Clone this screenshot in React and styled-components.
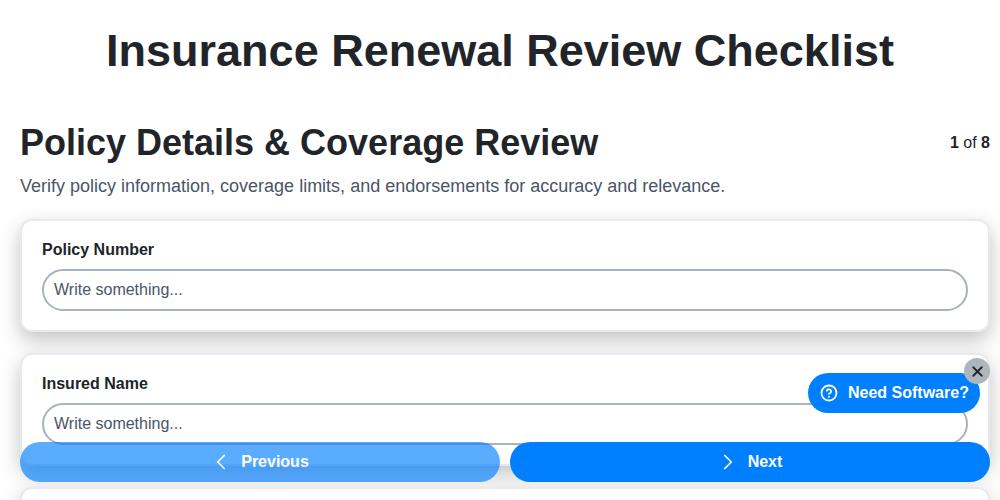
import React from "react"
import styled, { createGlobalStyle } from "styled-components"
import { ChevronLeft, ChevronRight, CircleHelp, X } from "lucide-react"

const GlobalStyle = createGlobalStyle`
    html, body {
        margin: 0;
        height: 100%;
        overflow: hidden;
        background: #fff;
        font-family: "Liberation Sans", Arial, sans-serif;
        color: #212529;
    }
    * {
        box-sizing: border-box;
    }
`

const Title = styled.h1`
    margin: 0;
    padding-top: 25px;
    height: 120px;
    font-size: 45px;
    line-height: 52px;
    font-weight: 700;
    text-align: center;
`

const Main = styled.main`
    padding: 0 10px 0 20px;
`

const Header = styled.div`
    display: flex;
    justify-content: space-between;
    align-items: flex-start;
`

const Heading = styled.h2`
    margin: 0;
    font-size: 36px;
    line-height: 46px;
    font-weight: 700;
`

const Step = styled.div`
    padding-top: 13px;
    font-size: 16px;
    line-height: 20px;
    color: #212529;

    b {
        font-weight: 700;
    }
`

const Intro = styled.p`
    margin: 9px 0 22px;
    font-size: 18px;
    line-height: 22px;
    color: #4a5568;
`

const Fields = styled.div`
    display: flex;
    flex-direction: column;
    gap: 21px;
`

const Card = styled.div`
    height: 113px;
    padding: 20px;
    background: #fff;
    border: 2px solid #e9e9ef;
    border-radius: 12px;
    box-shadow: 0 8px 20px rgba(33, 37, 41, 0.28);
`

const Label = styled.label`
    display: block;
    margin-bottom: 10px;
    font-size: 16px;
    line-height: 18px;
    font-weight: 700;
`

const Input = styled.input`
    display: block;
    width: 100%;
    height: 42px;
    padding: 0 10px;
    background: #fff;
    border: 2px solid #a9b2bd;
    border-radius: 21px;
    outline: none;
    font-family: inherit;
    font-size: 16px;
    color: #4a5568;

    &::placeholder {
        color: #4a5568;
        opacity: 1;
    }
`

const Footer = styled.div`
    position: fixed;
    left: 20px;
    right: 10px;
    bottom: 18px;
    display: flex;
    gap: 10px;
`

const NavButton = styled.button`
    flex: 1;
    height: 40px;
    display: flex;
    align-items: center;
    justify-content: center;
    gap: 7px;
    padding: 0 3px 0 0;
    border: 0;
    border-radius: 20px;
    background: #0080ff;
    opacity: ${(props) => (props.$faded ? 0.65 : 1)};
    color: #fff;
    font-family: inherit;
    font-size: 16px;
    font-weight: 700;
`

const Promo = styled.div`
    position: fixed;
    left: 808px;
    top: 373px;
    width: 172px;
    height: 40px;
    display: flex;
    align-items: center;
    gap: 10px;
    padding-left: 12px;
    border-radius: 20px;
    background: #0080ff;
    color: #fff;
    font-size: 16px;
    font-weight: 700;
    white-space: nowrap;
`

const CloseButton = styled.div`
    position: fixed;
    left: 964px;
    top: 358px;
    width: 26px;
    height: 26px;
    display: flex;
    align-items: center;
    justify-content: center;
    border-radius: 50%;
    background: #adb5bd;
    color: #212529;
`

const fields = ["Policy Number", "Insured Name"]

const App = () => {
    return (
        <>
            <GlobalStyle />
            <Title>Insurance Renewal Review Checklist</Title>
            <Main>
                <Header>
                    <Heading>Policy Details &amp; Coverage Review</Heading>
                    <Step><b>1</b> of <b>8</b></Step>
                </Header>
                <Intro>Verify policy information, coverage limits, and endorsements for accuracy and relevance.</Intro>
                <Fields>
                    {fields.map((name) => (
                        <Card key={name}>
                            <Label>{name}</Label>
                            <Input placeholder="Write something..." />
                        </Card>
                    ))}
                    <Card />
                </Fields>
            </Main>
            <Footer>
                <NavButton $faded>
                    <ChevronLeft size={26} strokeWidth={1.6} />
                    Previous
                </NavButton>
                <NavButton>
                    <ChevronRight size={26} strokeWidth={1.6} />
                    Next
                </NavButton>
            </Footer>
            <Promo>
                <CircleHelp size={18} strokeWidth={2.4} />
                Need Software?
            </Promo>
            <CloseButton>
                <X size={17} strokeWidth={2.5} />
            </CloseButton>
        </>
    )
}

export default App
